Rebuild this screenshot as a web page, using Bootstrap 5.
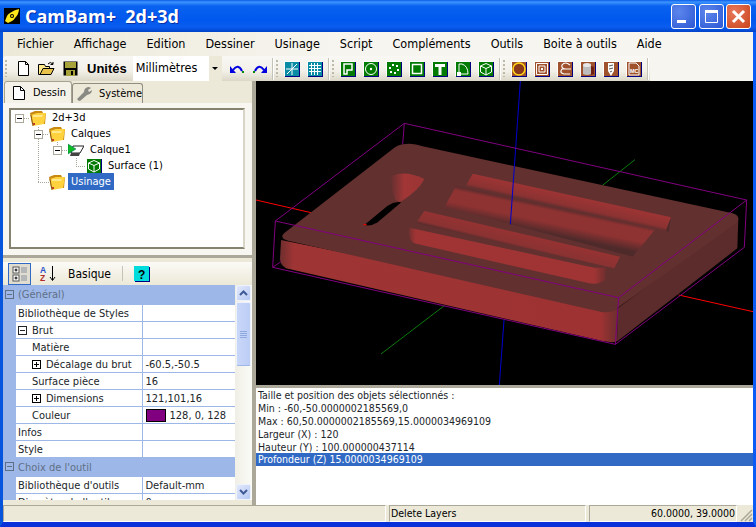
<!DOCTYPE html>
<html>

<head>
    <title>CamBam+ 2d+3d</title>
    <link rel="stylesheet" href="https://cdn.jsdelivr.net/npm/bootstrap@5.3.0/dist/css/bootstrap.min.css">
    <style>
        html, body { margin: 0; height: 100%; overflow: hidden; background: #0855dd; }
        body { font-family: "DejaVu Sans Condensed", "Liberation Sans", sans-serif; font-stretch: condensed; font-size: 10.5px; color: #000; line-height: 1; }
        .cb-window { width: 756px; height: 527px; }
        .cb-title { height: 32px; padding: 0 5px 0 4px; background: linear-gradient(180deg, #0a5ae8 0, #3d95ff 2px, #0a62f0 6px, #0058ee 20px, #0a5df0 27px, #0042c8 32px); }
        .cb-title-text { font-family: "Open Sans", "Liberation Sans", sans-serif; font-stretch: normal; font-weight: 700; font-size: 18px; color: #fff; white-space: pre; margin-left: 5px; text-shadow: 1px 1px 0 #0a2fa8; }
        .cb-winbtn { width: 25px; height: 25px; padding: 0; border: 1px solid #fff; border-radius: 3px; margin-left: 2.5px; background: radial-gradient(circle at 30% 30%, #5c86ec, #2c58d4); }
        .cb-winbtn.cb-close { background: radial-gradient(circle at 30% 30%, #e8795a, #c9431c); }
        .cb-client { border-left: 3px solid #0855dd; border-right: 3px solid #0a5cf5; border-bottom: 5px solid #0831d9; height: 495px; }
        .cb-menu { height: 24px; padding: 1px 0 0 14px; column-gap: 20px; background: linear-gradient(90deg, #ece9d8, #f6f5ef 45%); font-size: 12.5px; }
        .cb-menu .nav-link { padding: 0; color: #000; }
        .cb-bar { height: 25px; background: linear-gradient(90deg, #ece9d8, #f6f5ef 45%); }
        .cb-strip { height: 25px; width: 647px; padding-left: 2px; border-radius: 3px 3px 0 0; background: linear-gradient(180deg, #f9f8f4, #f2f0e8 60%, #dcd8c8); }
        .cb-strip > *, .cb-tiles > * { flex: none; }
        .cb-grip { width: 2px; height: 17px; margin: 0 6px 0 0; background: repeating-linear-gradient(180deg, #bdb9a8 0 2px, transparent 2px 4px); }
        .cb-sep { width: 1px; height: 22px; margin: 0 3px 0 5px; background: #c5c2b8; box-shadow: 1px 0 0 #fff; }
        .cb-tiles { column-gap: 7px; }
        .cb-undo { column-gap: 5px; margin-left: 4px; }
        .cb-new { margin-left: 4px; }
        .cb-open { margin-left: 8px; }
        .cb-save { margin-left: 8px; }
        .cb-units { font-weight: 700; font-size: 13px; font-family: "Liberation Sans", sans-serif; font-stretch: normal; margin: 0 6px 0 9px; }
        .cb-unit-select { width: 89px; height: 25px; background: #fff; font-size: 12.5px; padding-left: 3px; }
        .cb-unit-arrow { width: 13px; height: 25px; margin-left: auto; background: #ece9d8; }
        .cb-unit-arrow::after { content: ""; border: 3px solid transparent; border-top: 3px solid #000; border-bottom: 0; }
        .cb-left { width: 249px; background: #ece9d8; }
        .cb-split-v { width: 4px; background: #aca899; }
        .cb-tabs { height: 22px; padding-left: 1px; border: 0; }
        .cb-tabs .nav-link { padding: 0; height: 20px; margin-top: 2px; border: 1px solid #918d80; border-bottom: 0; border-radius: 3px 3px 0 0; color: #000; background: #ece9d8; font-size: 11px; }
        .cb-tabs .nav-link.active { height: 22px; margin-top: 0; background: #f4f2e8; border-color: #a5a292; }
        .cb-tab-a { width: 68px; padding-left: 8px !important; column-gap: 8px; }
        .cb-tab-b { width: 71px; padding-left: 3px !important; column-gap: 6px; }
        .cb-tree-pane { height: 152px; padding: 5px 7px 2px 6px; background: #f7f6f0; }
        .cb-tree { height: 141px; background: #fff; border: 2px solid #85836f; border-right-color: #d8d5c6; border-bottom-color: #85836f; }
        .cb-node { height: 16px; font-size: 11px; white-space: nowrap; }
        .cb-node > span { margin-top: -1px; }
        .cb-node-1 { padding-left: 4px; }
        .cb-node-2 { padding-left: 23px; }
        .cb-node-3 { padding-left: 42px; }
        .cb-node-4 { padding-left: 75px; }
        .cb-node-5 { padding-left: 38px; }
        .cb-exp { width: 9px; height: 9px; margin-right: 6px; flex: none; }
        .cb-tree-ico { flex: none; margin-right: 6px; }
        .cb-node-sel { background: #316ac5; color: #fff; padding: 3px 3px 3px; margin-left: -3px; }
        .cb-lines { position: absolute; left: 0; top: 0; pointer-events: none; }
        .cb-split-h { height: 3px; background: #aca899; }
        .cb-props-bar { height: 23px; margin-top: 4px; padding-left: 5px; background: linear-gradient(180deg, #fbfaf6, #ece9d8); }
        .cb-toggle { width: 23px; height: 22px; background: #e0ddd0; border: 1px solid #316ac5; }
        .cb-basic { font-size: 12px; margin: 0 11px 0 11px; }
        .cb-bar-sep { width: 1px; height: 15px; margin-right: 11px; background: #c5c2b8; }
        .cb-grid { height: 215px; background: #fff; overflow: hidden; }
        .cb-props { width: 232px; table-layout: fixed; margin: 0; border-collapse: collapse; --bs-table-bg: transparent; }
        .cb-props td { height: 17px; padding: 1px 0 0 2px; border: 0; border-bottom: 1px solid #9db8e8; vertical-align: middle; white-space: nowrap; font-size: 11px; overflow: hidden; }
        .cb-props td.cb-gut { padding: 0; background: #9db8e8; border-bottom-color: #9db8e8; }
        .cb-props td.cb-name { border-right: 1px solid #9db8e8; }
        .cb-props td.cb-val { padding-left: 3px; }
        .cb-props tr.cb-cat td { height: 19px; background: #9db8e8; color: #5f6f86; }
        .cb-props td.cb-lv1 { padding-left: 16px; }
        .cb-col-gut { width: 13px; }
        .cb-col-name { width: 126px; }
        .cb-grid-exp { width: 9px; height: 9px; margin-right: 5px; vertical-align: -1px; }
        .cb-swatch { display: inline-block; width: 20px; height: 13px; border: 1px solid #000; background: #800080; margin-right: 4px; vertical-align: -3px; }
        .cb-scroll { width: 17px; background: linear-gradient(90deg, #f0efe6, #fbfbf7); padding: 0 1px; }
        .cb-sbtn { height: 16px; flex: none; border: 1px solid #eef2fd; border-radius: 2px; background: linear-gradient(135deg, #e2e9fb, #b6c8f3); }
        .cb-thumb { height: 64px; flex: none; margin-top: 1px; border: 1px solid #eef2fd; border-bottom-color: #9db8e8; border-radius: 2px; background: linear-gradient(90deg, #c9d7f8, #bccdf6); }
        .cb-right { width: 497px; }
        .cb-view { display: block; height: 304px; background: #000; }
        .cb-split-r { height: 3px; background: #aca899; }
        .cb-log { height: 117px; padding: 1px 0 0; margin: 0; border-radius: 0; overflow: hidden; }
        .cb-log .list-group-item { height: 13px; padding: 0 0 0 2px; border: 0; border-radius: 0; font-size: 10.5px; line-height: 13px; white-space: nowrap; }
        .cb-log .list-group-item.active { background: #316ac5; }
        .cb-status { height: 17px; background: #ece9d8; font-size: 10.5px; }
        .cb-pane { height: 17px; border: 1px solid; border-color: #aca899 #fff #fff #aca899; padding: 0 1px; }
        .cb-pane-a { width: 383px; margin-right: 3px; }
        .cb-pane-b { width: 197px; margin-right: 3px; }
        .cb-pane-c { width: 148px; }
        .cb-sgrip { width: 16px; height: 17px; }
    </style>
</head>

<body>
    <svg width="0" height="0" class="position-absolute">
        <defs>
            <symbol id="tile-green" viewBox="0 0 16 16"><rect width="15" height="15" fill="#fff" /><rect x="1" y="1" width="15" height="15" fill="#000080" /><rect x="1" y="1" width="14" height="14" fill="#007a00" /></symbol>
            <symbol id="tile-brown" viewBox="0 0 16 16"><rect width="15" height="15" fill="#fff" /><rect x="1" y="1" width="15" height="15" fill="#000080" /><rect x="1" y="1" width="14" height="14" fill="#a0522d" /></symbol>
            <symbol id="tile-teal" viewBox="0 0 16 16"><rect width="15" height="15" fill="#fff" /><rect x="1" y="1" width="15" height="15" fill="#000080" /><rect x="1" y="1" width="14" height="14" fill="#0a8ca5" /></symbol>
            <symbol id="cube" viewBox="0 0 16 16"><use href="#tile-green" width="16" height="16" /><path d="M8 2.500 13.500 5v6L8 14 2.500 11V5zM2.500 5 8 7.500 13.500 5M8 7.500V14" fill="none" stroke="#fff" /></symbol>
            <symbol id="folder" viewBox="0 0 16 16"><path d="M0 3 5 1h7l1 2h3l-1 11H2z" fill="#c98a12" /><path d="M1 5 7 3h9l-2 11-11 2z" fill="#ffd23e" /><path d="M3 5h10l-1 2H3z" fill="#ffe98a" /><path d="M1 5l2 11" stroke="#8a5a10" fill="none" /><path d="M3 13l2 2M3 15l2-2" stroke="#c0392b" fill="none" /></symbol>
            <symbol id="minus" viewBox="0 0 9 9"><rect x=".5" y=".5" width="8" height="8" fill="#fff" stroke="#aca899" /><path d="M2 4.500h5" stroke="#000" /></symbol>
            <symbol id="gminus" viewBox="0 0 9 9"><rect x=".5" y=".5" width="8" height="8" fill="none" stroke="currentColor" /><path d="M2 4.500h5" stroke="currentColor" /></symbol>
            <symbol id="gplus" viewBox="0 0 9 9"><rect x=".5" y=".5" width="8" height="8" fill="#fff" stroke="#000" /><path d="M2 4.500h5M4.500 2v5" stroke="#000" /></symbol>
            <linearGradient id="g-front" gradientUnits="userSpaceOnUse" x1="72" y1="0" x2="1085" y2="0">
                <stop offset="0" stop-color="#6e2e2e" /><stop offset=".04" stop-color="#9e3434" /><stop offset=".95" stop-color="#9e3232" /><stop offset="1" stop-color="#6a2e2e" />
            </linearGradient>
            <linearGradient id="g-cone" gradientUnits="userSpaceOnUse" x1="405" y1="0" x2="505" y2="0">
                <stop offset="0" stop-color="#663030" /><stop offset=".4" stop-color="#a23636" /><stop offset="1" stop-color="#9a3434" />
            </linearGradient>
            <linearGradient id="g-r1" gradientUnits="userSpaceOnUse" x1="900" y1="321" x2="890" y2="366">
                <stop offset="0" stop-color="#9e3434" /><stop offset=".7" stop-color="#8c3232" /><stop offset="1" stop-color="#5a2c2c" />
            </linearGradient>
            <linearGradient id="g-r2" gradientUnits="userSpaceOnUse" x1="800" y1="346" x2="783" y2="427">
                <stop offset="0" stop-color="#5c2c2c" /><stop offset=".15" stop-color="#8e3232" /><stop offset=".6" stop-color="#8e3232" /><stop offset="1" stop-color="#4e2a2a" />
            </linearGradient>
            <linearGradient id="g-r3" gradientUnits="userSpaceOnUse" x1="800" y1="447" x2="790" y2="488">
                <stop offset="0" stop-color="#963232" /><stop offset=".8" stop-color="#8a3232" /><stop offset="1" stop-color="#5c2c2c" />
            </linearGradient>
            <linearGradient id="g-r4" gradientUnits="userSpaceOnUse" x1="455" y1="0" x2="1050" y2="0">
                <stop offset="0" stop-color="#6c2e2e" /><stop offset=".04" stop-color="#a03434" /><stop offset=".94" stop-color="#a03434" /><stop offset="1" stop-color="#6e2e2e" />
            </linearGradient>
        </defs>
    </svg>

    <div class="cb-window d-flex flex-column">
        <!-- title bar -->
        <div class="cb-title d-flex align-items-center flex-none">
            <svg width="16" height="16" viewBox="0 0 16 16"><rect width="16" height="16" fill="#000" /><path d="M1 13 3 8q1-2 3-3 4-3 9-4 0 5-4 9-1 2-3 3l-4 2z" fill="#ffe81a" /><circle cx="8" cy="8" r="2" fill="#000" /><circle cx="8" cy="8" r="1" fill="#ffe81a" /></svg>
            <span class="cb-title-text">CamBam+  2d+3d</span>
            <div class="ms-auto d-flex">
                <button class="cb-winbtn d-flex align-items-end"><svg width="23" height="23" viewBox="0 0 23 23"><rect x="5" y="15" width="9" height="3" fill="#fff" /></svg></button>
                <button class="cb-winbtn"><svg class="d-block" width="23" height="23" viewBox="0 0 23 23"><path d="M5.500 5.500h12v12h-12z" fill="none" stroke="#fff" /><rect x="5" y="5" width="13" height="3" fill="#fff" /></svg></button>
                <button class="cb-winbtn cb-close"><svg class="d-block" width="23" height="23" viewBox="0 0 23 23"><path d="M6 6l11 11M17 6 6 17" stroke="#fff" stroke-width="3" /></svg></button>
            </div>
        </div>

        <div class="cb-client d-flex flex-column">
            <!-- menu -->
            <nav class="nav cb-menu align-items-center flex-nowrap">
                <a class="nav-link" href="#">Fichier</a>
                <a class="nav-link" href="#">Affichage</a>
                <a class="nav-link" href="#">Edition</a>
                <a class="nav-link" href="#">Dessiner</a>
                <a class="nav-link" href="#">Usinage</a>
                <a class="nav-link" href="#">Script</a>
                <a class="nav-link" href="#">Compléments</a>
                <a class="nav-link" href="#">Outils</a>
                <a class="nav-link" href="#">Boite à outils</a>
                <a class="nav-link" href="#">Aide</a>
            </nav>

            <!-- toolbars -->
            <div class="cb-bar">
                <div class="cb-strip d-flex align-items-center">
                    <span class="cb-grip"></span>
                    <svg class="cb-new" width="13" height="15" viewBox="0 0 13 15"><path d="M1.500.5h7l3 3v11h-10z" fill="#fff" stroke="#000" /><path d="M8.500.5v3h3" fill="none" stroke="#000" /></svg>
                    <svg class="cb-open" width="17" height="15" viewBox="0 0 17 15"><path d="M.5 3.500h6l1 2h4v8h-11z" fill="#ffe98a" stroke="#000" /><path d="M2 13.500 5 7.500h11l-3 6z" fill="#e8c24a" stroke="#000" /><path d="M10 3q2-3 5 0M15 1v2.500h-2.500" fill="none" stroke="#000" /></svg>
                    <svg class="cb-save" width="15" height="15" viewBox="0 0 15 15"><rect x=".5" y=".5" width="14" height="14" fill="#000" /><rect x="2" y="1" width="11" height="6" fill="#a8a23a" /><rect x="3" y="9" width="9" height="6" fill="#a8a23a" /><rect x="8" y="10" width="2" height="4" fill="#000" /></svg>
                    <span class="cb-units">Unités</span>
                    <div class="cb-unit-select d-flex align-items-center">
                        <span>Millimètres</span>
                        <span class="cb-unit-arrow d-flex align-items-center justify-content-center"></span>
                    </div>
                    <div class="d-flex cb-tiles cb-undo">
                        <svg class="ms-1" width="14" height="10" viewBox="0 0 14 10"><path d="M3 6Q8-1 12 7" fill="none" stroke="#0000e0" stroke-width="2" /><path d="M0 2l6 7H0z" fill="#0000e0" /><rect x="12" y="7" width="2" height="2" fill="#0a8a0a" /></svg>
                        <svg class="ms-1" width="14" height="10" viewBox="0 0 14 10"><path d="M11 6Q6-1 2 7" fill="none" stroke="#0000e0" stroke-width="2" /><path d="M14 2 8 9h6z" fill="#0000e0" /><rect y="7" width="2" height="2" fill="#0a8a0a" /></svg>
                    </div>
                    <span class="cb-sep"></span><span class="cb-grip"></span>
                    <div class="d-flex cb-tiles">
                        <svg width="16" height="16" viewBox="0 0 16 16"><use href="#tile-teal" width="16" height="16" /><path d="M8 2v12M2 8h12" stroke="#fff" /><path d="M3 13 13 3" stroke="#fff" /></svg>
                        <svg width="16" height="16" viewBox="0 0 16 16"><use href="#tile-teal" width="16" height="16" /><path d="M2 4.500h12M2 7.500h12M2 10.500h12M4.500 2v12M7.500 2v12M10.500 2v12" stroke="#fff" /></svg>
                    </div>
                    <span class="cb-sep"></span><span class="cb-grip"></span>
                    <div class="d-flex cb-tiles">
                        <svg width="16" height="16" viewBox="0 0 16 16"><use href="#tile-green" width="16" height="16" /><path d="M4 13V3h8v6H7v4z" fill="none" stroke="#fff" stroke-width="1.500" /></svg>
                        <svg width="16" height="16" viewBox="0 0 16 16"><use href="#tile-green" width="16" height="16" /><circle cx="8" cy="8" r="5.500" fill="none" stroke="#fff" /><circle cx="8" cy="8" r="1.200" fill="#fff" /></svg>
                        <svg width="16" height="16" viewBox="0 0 16 16"><use href="#tile-green" width="16" height="16" /><path d="M6 3h2v2H6zM10 4h2v2h-2zM3 6h2v2H3zM11 8h2v2h-2zM4 10h2v2H4zM8 11h2v2H8z" fill="#fff" /></svg>
                        <svg width="16" height="16" viewBox="0 0 16 16"><use href="#tile-green" width="16" height="16" /><rect x="3.500" y="3.500" width="9" height="9" fill="none" stroke="#fff" stroke-width="1.500" /></svg>
                        <svg width="16" height="16" viewBox="0 0 16 16"><use href="#tile-green" width="16" height="16" /><path d="M3 3h10v3h-3.500v8h-3V6H3z" fill="#fff" /></svg>
                        <svg width="16" height="16" viewBox="0 0 16 16"><use href="#tile-green" width="16" height="16" /><path d="M4 13V3h3q6 2 6 10z" fill="none" stroke="#fff" /><rect x="2" y="11" width="4" height="4" fill="#fff" /></svg>
                        <svg width="16" height="16" viewBox="0 0 16 16"><use href="#cube" width="16" height="16" /></svg>
                    </div>
                    <span class="cb-sep"></span><span class="cb-grip"></span>
                    <div class="d-flex cb-tiles">
                        <svg width="16" height="16" viewBox="0 0 16 16"><use href="#tile-brown" width="16" height="16" /><circle cx="8" cy="8" r="6" fill="#8a3a1a" stroke="#ffd81a" stroke-width="1.500" /></svg>
                        <svg width="16" height="16" viewBox="0 0 16 16"><use href="#tile-brown" width="16" height="16" /><path d="M2.500 2.500h11v11h-11zM5 5h6v6H5z" fill="none" stroke="#fff" /><rect x="7" y="7" width="2" height="2" fill="#fff" /></svg>
                        <svg width="16" height="16" viewBox="0 0 16 16"><use href="#tile-brown" width="16" height="16" /><path d="M13 4Q8 0 5 4q-1 3 3 4H5q-3 4 2 5h6M8 8h6" fill="none" stroke="#fff" stroke-width="1.200" /></svg>
                        <svg width="16" height="16" viewBox="0 0 16 16"><use href="#tile-brown" width="16" height="16" /><path d="M3 4v9q4 2 8 0V4z" fill="#bdbdbd" /><ellipse cx="7" cy="4" rx="4" ry="2" fill="#e8e8e8" /><path d="M11 5l3 1v7l-3 1z" fill="#6e1f10" /></svg>
                        <svg width="16" height="16" viewBox="0 0 16 16"><use href="#tile-brown" width="16" height="16" /><path d="M5 2h6v8l-3 5-3-5z" fill="#fff" /><path d="M6 5l4-1M6 8l4-1M7 11l2-1" stroke="#555" /></svg>
                        <svg width="16" height="16" viewBox="0 0 16 16"><use href="#tile-brown" width="16" height="16" /><path d="M3 2h7l3 3v9H3z" fill="none" stroke="#fff" /><text x="4" y="12" font-size="5.500" font-weight="700" fill="#fff" font-family="Liberation Sans, sans-serif">MC</text></svg>
                    </div>
                    <span class="cb-sep"></span>
                </div>
            </div>

            <div class="d-flex flex-grow-1">
                <!-- left column -->
                <div class="cb-left d-flex flex-column">
                    <ul class="nav nav-tabs cb-tabs flex-nowrap">
                        <li class="nav-item"><a class="nav-link active cb-tab-a d-flex align-items-center" href="#"><svg width="12" height="14" viewBox="0 0 12 14"><path d="M.5.5h7l4 4v9H.5z" fill="#fff" stroke="#000" /><path d="M7.500.5v4h4" fill="none" stroke="#000" /></svg>Dessin</a></li>
                        <li class="nav-item"><a class="nav-link cb-tab-b d-flex align-items-center" href="#"><svg width="17" height="15" viewBox="0 0 17 15"><path d="M1 13 8 6q0-4 4-5 2 0 3 1l-3 2 1 2 3-2q0 4-5 5l-7 6q-2 0-3-2z" fill="#8a8a84" /></svg>Système</a></li>
                    </ul>
                    <div class="cb-tree-pane">
                        <div class="cb-tree position-relative">
                            <svg class="cb-lines" width="160" height="90" viewBox="0 0 160 90"><path d="M13 8.500h6M27.500 17v55M32 24.500h6M46.500 32v8M51 40.500h6M65.500 48v8M65 56.500h12M27 72.500h11" fill="none" stroke="#aca899" stroke-dasharray="1 1" /></svg>
                            <div class="cb-node cb-node-1 d-flex align-items-center position-relative"><svg class="cb-exp" viewBox="0 0 9 9"><use href="#minus" /></svg><svg class="cb-tree-ico" width="16" height="16"><use href="#folder" /></svg><span>2d+3d</span></div>
                            <div class="cb-node cb-node-2 d-flex align-items-center position-relative"><svg class="cb-exp" viewBox="0 0 9 9"><use href="#minus" /></svg><svg class="cb-tree-ico" width="16" height="16"><use href="#folder" /></svg><span>Calques</span></div>
                            <div class="cb-node cb-node-3 d-flex align-items-center position-relative"><svg class="cb-exp" viewBox="0 0 9 9"><use href="#minus" /></svg><svg class="cb-tree-ico" width="16" height="16" viewBox="0 0 16 16"><path d="M5 4h11l-4 7H3z" fill="#fff" stroke="#222" /><path d="M3 11h9l-1 3H2z" fill="#444" /><path d="M0 2l8 5-8 5z" fill="#0dbb22" stroke="#066" stroke-width=".5" /></svg><span>Calque1</span></div>
                            <div class="cb-node cb-node-4 d-flex align-items-center position-relative"><svg class="cb-tree-ico" width="16" height="16"><use href="#cube" /></svg><span>Surface (1)</span></div>
                            <div class="cb-node cb-node-5 d-flex align-items-center position-relative"><svg class="cb-tree-ico" width="16" height="16"><use href="#folder" /></svg><span class="cb-node-sel">Usinage</span></div>
                        </div>
                    </div>
                    <div class="cb-split-h"></div>
                    <div class="cb-props-bar d-flex align-items-center">
                        <span class="cb-toggle d-flex align-items-center justify-content-center"><svg width="16" height="16" viewBox="0 0 16 16"><rect x="1" y="1" width="6" height="6" fill="#fff" stroke="#555" /><rect x="1" y="9" width="6" height="6" fill="#fff" stroke="#555" /><path d="M2.500 4h3M4 2.500v3M2.500 12h3M4 10.500v3" stroke="#000" /><path d="M9 2h6M9 4h6M9 6h6M9 10h6M9 12h6M9 14h6" stroke="#8890a0" /></svg></span>
                        <svg class="ms-2" width="18" height="17" viewBox="0 0 18 17"><text x="1" y="7.500" font-size="8.500" font-weight="700" fill="#2a50c8" font-family="Liberation Sans, sans-serif">A</text><text x="1" y="16" font-size="8.500" font-weight="700" fill="#b02a2a" font-family="Liberation Sans, sans-serif">Z</text><path d="M13.500 1v14M11 12l2.500 3.500L16 12" fill="none" stroke="#000" /></svg>
                        <span class="cb-basic">Basique</span>
                        <span class="cb-bar-sep"></span>
                        <svg width="16" height="16" viewBox="0 0 16 16"><rect width="15" height="15" fill="#00dcdc" /><rect x="15" y="1" width="1" height="15" fill="#000080" /><rect x="1" y="15" width="15" height="1" fill="#000080" /><text x="4" y="12.500" font-size="12" font-weight="700" fill="#000" font-family="Liberation Sans, sans-serif">?</text></svg>
                    </div>
                    <div class="cb-grid d-flex">
                        <div class="overflow-hidden">
                            <table class="table cb-props">
                                <colgroup><col class="cb-col-gut"><col class="cb-col-name"><col></colgroup>
                                <tr class="cb-cat"><td class="cb-gut text-center" style="color:#5f6f86"><svg class="cb-grid-exp m-0" viewBox="0 0 9 9"><use href="#gminus" /></svg></td><td colspan="2"><span>(Général)</span></td></tr>
                                <tr><td class="cb-gut"></td><td class="cb-name">Bibliothèque de Styles</td><td class="cb-val"></td></tr>
                                <tr><td class="cb-gut"></td><td class="cb-name"><svg class="cb-grid-exp" viewBox="0 0 9 9"><use href="#gminus" /></svg>Brut</td><td class="cb-val"></td></tr>
                                <tr><td class="cb-gut"></td><td class="cb-name cb-lv1">Matière</td><td class="cb-val"></td></tr>
                                <tr><td class="cb-gut"></td><td class="cb-name cb-lv1"><svg class="cb-grid-exp" viewBox="0 0 9 9"><use href="#gplus" /></svg>Décalage du brut</td><td class="cb-val">-60.5,-50.5</td></tr>
                                <tr><td class="cb-gut"></td><td class="cb-name cb-lv1">Surface pièce</td><td class="cb-val">16</td></tr>
                                <tr><td class="cb-gut"></td><td class="cb-name cb-lv1"><svg class="cb-grid-exp" viewBox="0 0 9 9"><use href="#gplus" /></svg>Dimensions</td><td class="cb-val">121,101,16</td></tr>
                                <tr><td class="cb-gut"></td><td class="cb-name cb-lv1">Couleur</td><td class="cb-val"><span class="cb-swatch"></span>128, 0, 128</td></tr>
                                <tr><td class="cb-gut"></td><td class="cb-name">Infos</td><td class="cb-val"></td></tr>
                                <tr><td class="cb-gut"></td><td class="cb-name">Style</td><td class="cb-val"></td></tr>
                                <tr class="cb-cat"><td class="cb-gut text-center" style="color:#5f6f86"><svg class="cb-grid-exp m-0" viewBox="0 0 9 9"><use href="#gminus" /></svg></td><td colspan="2">Choix de l'outil</td></tr>
                                <tr><td class="cb-gut"></td><td class="cb-name">Bibliothèque d'outils</td><td class="cb-val">Default-mm</td></tr>
                                <tr><td class="cb-gut"></td><td class="cb-name">Diamètre de l'outil</td><td class="cb-val">0</td></tr>
                            </table>
                        </div>
                        <div class="cb-scroll d-flex flex-column">
                            <div class="cb-sbtn d-flex align-items-center justify-content-center"><svg width="9" height="6" viewBox="0 0 9 6"><path d="M1 5l3.500-3.500L8 5" fill="none" stroke="#3f5a96" stroke-width="2" /></svg></div>
                            <div class="cb-thumb d-flex align-items-center justify-content-center"><svg width="7" height="7" viewBox="0 0 7 7"><path d="M0 .5h7M0 2.500h7M0 4.500h7M0 6.500h7" stroke="#8ea8e0" /></svg></div>
                            <div class="cb-sbtn mt-auto d-flex align-items-center justify-content-center"><svg width="9" height="6" viewBox="0 0 9 6"><path d="M1 1l3.500 3.500L8 1" fill="none" stroke="#3f5a96" stroke-width="2" /></svg></div>
                        </div>
                    </div>
                </div>
                <div class="cb-split-v"></div>

                <!-- 3d view and log -->
                <div class="cb-right d-flex flex-column">
                    <svg class="cb-view" width="497" height="304" viewBox="0 -12 1491 912" fill="none">
                        <path d="M0 345 165 383M1268 630 1491 680" stroke="#f00" stroke-width="3" />
                        <path d="M1137 224 1037 303M565 662 375 807" stroke="#0a7a0a" stroke-width="3" />
                        <path d="M744 705 730 900" stroke="#00c" stroke-width="3" />
                        <!-- body -->
                        <path d="M75 465 72 520Q72 540 90 550L1040 768Q1075 775 1085 768L1085 670Z" fill="url(#g-front)" />
                        <path d="M1085 670 1447 400 1444 490 1085 768Z" fill="#5c2c2c" />
                        <path d="M440 178Q470 172 500 184L1430 385Q1458 395 1440 415L1085 668Q1075 682 1040 682L110 470Q60 462 90 440L415 188Q425 180 440 178Z" fill="#633030" />
                        <!-- recesses -->
                        <path d="M650 266 1245 397 1230 437 630 302Z" fill="url(#g-r1)" />
                        <path d="M1245 397 1230 437 1238 440Z" fill="#4e2a2a" />
                        <path d="M600 303 1198 433 1130 515 566 365Z" fill="url(#g-r2)" />
                        <path d="M505 378 1092 515 1075 550 480 415Z" fill="url(#g-r3)" />
                        <path d="M460 428 1000 545Q1035 552 1050 545L1048 582Q1035 600 1000 595L475 475Q455 465 460 428Z" fill="url(#g-r4)" />
                        <path d="M408 272Q450 255 505 282 490 315 432 352L418 345Q400 300 408 272Z" fill="url(#g-cone)" />
                        <path d="M325 420 395 362Q415 348 436 352L365 412Q345 425 325 420Z" fill="#000" />
                        <path d="M322 419h10" stroke="#f00" stroke-width="3" />
                        <path d="M793 -12 763 418" stroke="#00c" stroke-width="3" />
                        <!-- bounding box -->
                        <path d="M445 115 1472 345 1088 638 58 408ZM58 408 50 547 1078 778 1465 487 1472 345M1088 638 1078 778M445 115 440 178M50 547 75 530" stroke="#800080" stroke-width="3" />
                    </svg>
                    <div class="cb-split-r"></div>
                    <div class="list-group cb-log bg-white">
                        <div class="list-group-item">Taille et position des objets sélectionnés :</div>
                        <div class="list-group-item">Min : -60,-50.0000002185569,0</div>
                        <div class="list-group-item">Max : 60,50.0000002185569,15.0000034969109</div>
                        <div class="list-group-item">Largeur (X) : 120</div>
                        <div class="list-group-item">Hauteur (Y) : 100.000000437114</div>
                        <div class="list-group-item active">Profondeur (Z) 15.0000034969109</div>
                    </div>
                </div>
            </div>

            <!-- status bar -->
            <div class="cb-status d-flex">
                <div class="cb-pane cb-pane-a"></div>
                <div class="cb-pane cb-pane-b d-flex align-items-center">Delete Layers</div>
                <div class="cb-pane cb-pane-c d-flex align-items-center justify-content-end">60.0000, 39.0000</div>
                <svg class="cb-sgrip" viewBox="0 0 16 17"><path d="M15 5 4 16M15 9 8 16M15 13 12 16" stroke="#aca899" stroke-width="1.500" /></svg>
            </div>
        </div>
    </div>
</body>

</html>
